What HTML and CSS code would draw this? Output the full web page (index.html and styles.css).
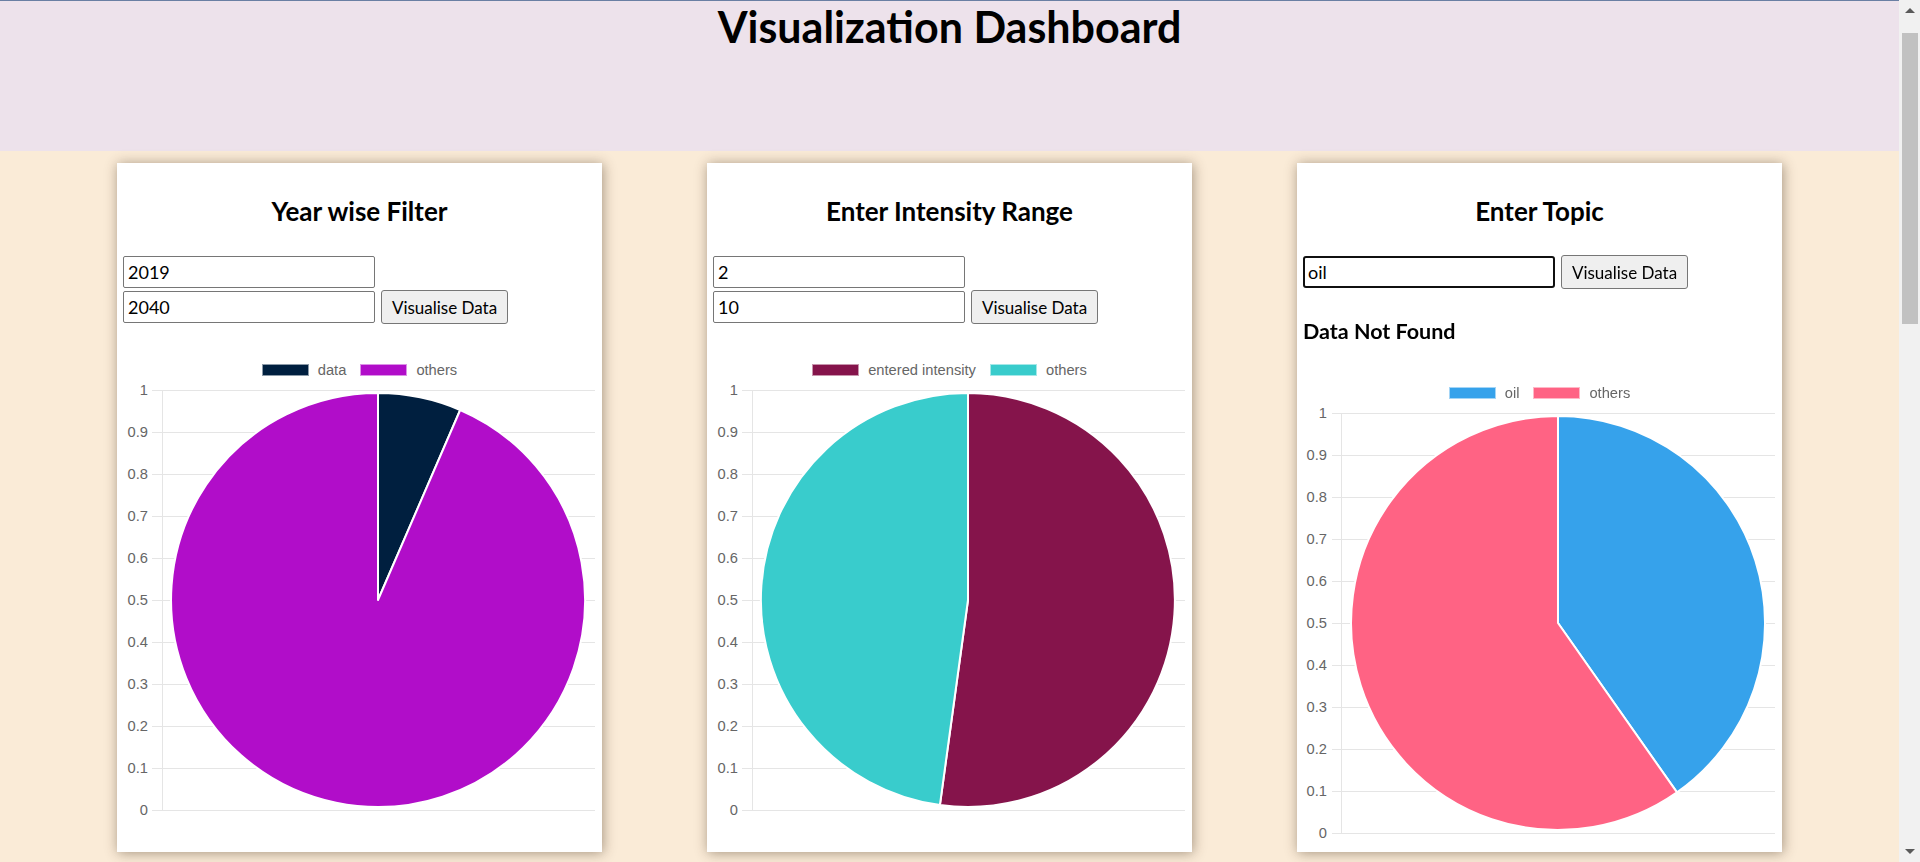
FILE: index.html
```html
<!DOCTYPE html>
<html lang="en">
<head>
<meta charset="utf-8">
<title>Visualization Dashboard</title>
<link rel="stylesheet" href="styles.css">
</head>
<body>
<div class="app">
<div class="viewport">
  <header class="topbar">
    <h1 class="title">Visualization Dashboard</h1>
  </header>
  <main class="cards">
    <section class="card">
      <h2 class="card-title">Year wise Filter</h2>
      <div class="form">
        <div class="row"><input class="field" type="text" value="2019"></div>
        <div class="row"><input class="field" type="text" value="2040"><button class="btn">Visualise Data</button></div>
      </div>
      <div class="legend">
        <span class="item"><span class="swatch sw-navy"></span>data</span>
        <span class="item"><span class="swatch sw-purple"></span>others</span>
      </div>
      <svg class="chart" width="473" height="476" viewBox="0 0 473 476">
        <g class="grid">
          <line x1="29" y1="12.5" x2="472" y2="12.5"/><line x1="29" y1="54.5" x2="472" y2="54.5"/><line x1="29" y1="96.5" x2="472" y2="96.5"/><line x1="29" y1="138.5" x2="472" y2="138.5"/><line x1="29" y1="180.5" x2="472" y2="180.5"/><line x1="29" y1="222.5" x2="472" y2="222.5"/><line x1="29" y1="264.5" x2="472" y2="264.5"/><line x1="29" y1="306.5" x2="472" y2="306.5"/><line x1="29" y1="348.5" x2="472" y2="348.5"/><line x1="29" y1="390.5" x2="472" y2="390.5"/><line x1="29" y1="432.5" x2="472" y2="432.5"/>
          <line x1="39.5" y1="12" x2="39.5" y2="433"/>
        </g>
        <g class="ticks">
          <text x="25" y="17">1</text><text x="25" y="59">0.9</text><text x="25" y="101">0.8</text><text x="25" y="143">0.7</text><text x="25" y="185">0.6</text><text x="25" y="227">0.5</text><text x="25" y="269">0.4</text><text x="25" y="311">0.3</text><text x="25" y="353">0.2</text><text x="25" y="395">0.1</text><text x="25" y="437">0</text>
        </g>
        <path class="slice" fill="#001f3f" d="M255 222 L255 15 A207 207 0 0 1 337.2 32 Z"/>
        <path class="slice" fill="#b10dc9" d="M255 222 L337.2 32 A207 207 0 1 1 255 15 Z"/>
      </svg>
    </section>

    <section class="card">
      <h2 class="card-title">Enter Intensity Range</h2>
      <div class="form">
        <div class="row"><input class="field" type="text" value="2"></div>
        <div class="row"><input class="field" type="text" value="10"><button class="btn">Visualise Data</button></div>
      </div>
      <div class="legend">
        <span class="item"><span class="swatch sw-maroon"></span>entered intensity</span>
        <span class="item"><span class="swatch sw-teal"></span>others</span>
      </div>
      <svg class="chart" width="473" height="476" viewBox="0 0 473 476">
        <g class="grid">
          <line x1="29" y1="12.5" x2="472" y2="12.5"/><line x1="29" y1="54.5" x2="472" y2="54.5"/><line x1="29" y1="96.5" x2="472" y2="96.5"/><line x1="29" y1="138.5" x2="472" y2="138.5"/><line x1="29" y1="180.5" x2="472" y2="180.5"/><line x1="29" y1="222.5" x2="472" y2="222.5"/><line x1="29" y1="264.5" x2="472" y2="264.5"/><line x1="29" y1="306.5" x2="472" y2="306.5"/><line x1="29" y1="348.5" x2="472" y2="348.5"/><line x1="29" y1="390.5" x2="472" y2="390.5"/><line x1="29" y1="432.5" x2="472" y2="432.5"/>
          <line x1="39.5" y1="12" x2="39.5" y2="433"/>
        </g>
        <g class="ticks">
          <text x="25" y="17">1</text><text x="25" y="59">0.9</text><text x="25" y="101">0.8</text><text x="25" y="143">0.7</text><text x="25" y="185">0.6</text><text x="25" y="227">0.5</text><text x="25" y="269">0.4</text><text x="25" y="311">0.3</text><text x="25" y="353">0.2</text><text x="25" y="395">0.1</text><text x="25" y="437">0</text>
        </g>
        <path class="slice" fill="#85144b" d="M255 222 L255 15 A207 207 0 1 1 226.9 427.1 Z"/>
        <path class="slice" fill="#39cccc" d="M255 222 L226.9 427.1 A207 207 0 0 1 255 15 Z"/>
      </svg>
    </section>

    <section class="card">
      <h2 class="card-title">Enter Topic</h2>
      <div class="form">
        <div class="row"><input class="field field-focus" type="text" value="oil" autofocus><button class="btn">Visualise Data</button></div>
      </div>
      <h3 class="notice">Data Not Found</h3>
      <div class="legend legend-low">
        <span class="item"><span class="swatch sw-blue"></span>oil</span>
        <span class="item"><span class="swatch sw-pink"></span>others</span>
      </div>
      <svg class="chart" width="473" height="476" viewBox="0 0 473 476">
        <g class="grid">
          <line x1="29" y1="12.5" x2="472" y2="12.5"/><line x1="29" y1="54.5" x2="472" y2="54.5"/><line x1="29" y1="96.5" x2="472" y2="96.5"/><line x1="29" y1="138.5" x2="472" y2="138.5"/><line x1="29" y1="180.5" x2="472" y2="180.5"/><line x1="29" y1="222.5" x2="472" y2="222.5"/><line x1="29" y1="264.5" x2="472" y2="264.5"/><line x1="29" y1="306.5" x2="472" y2="306.5"/><line x1="29" y1="348.5" x2="472" y2="348.5"/><line x1="29" y1="390.5" x2="472" y2="390.5"/><line x1="29" y1="432.5" x2="472" y2="432.5"/>
          <line x1="38.5" y1="12" x2="38.5" y2="433"/>
        </g>
        <g class="ticks">
          <text x="24" y="17">1</text><text x="24" y="59">0.9</text><text x="24" y="101">0.8</text><text x="24" y="143">0.7</text><text x="24" y="185">0.6</text><text x="24" y="227">0.5</text><text x="24" y="269">0.4</text><text x="24" y="311">0.3</text><text x="24" y="353">0.2</text><text x="24" y="395">0.1</text><text x="24" y="437">0</text>
        </g>
        <path class="slice" fill="#36a2eb" d="M255 222 L255 15 A207 207 0 0 1 374 391.4 Z"/>
        <path class="slice" fill="#ff6384" d="M255 222 L374 391.4 A207 207 0 1 1 255 15 Z"/>
      </svg>
    </section>
  </main>
</div>
<div class="scrollbar" aria-hidden="true">
  <div class="sb-btn sb-up"></div>
  <div class="sb-thumb"></div>
  <div class="sb-track"></div>
  <div class="sb-btn sb-down"></div>
</div>
</div>
</body>
</html>
```

FILE: styles.css
```css
html, body {
  margin: 0;
  height: 100%;
  overflow: hidden;
}

body {
  background: #faebd7;
  font-family: "Comic Sans MS", "Lato", sans-serif;
  color: #000;
}

.app {
  display: flex;
  height: 100vh;
}

.viewport {
  flex: 1;
  min-width: 0;
  overflow: hidden;
}

.scrollbar {
  flex: none;
  width: 21px;
  display: flex;
  flex-direction: column;
  background: #f1f1f1;
}

.sb-btn {
  height: 21px;
  flex: none;
  display: flex;
  align-items: center;
  justify-content: center;
}

.sb-up::before {
  content: "";
  border-left: 5px solid transparent;
  border-right: 5px solid transparent;
  border-bottom: 5px solid #5a5a5a;
}

.sb-down::before {
  content: "";
  border-left: 5px solid transparent;
  border-right: 5px solid transparent;
  border-top: 5px solid #5a5a5a;
}

.sb-thumb {
  flex: none;
  height: 291px;
  margin: 12px 2px 0 3px;
  background: #c1c1c1;
}

.sb-track {
  flex: 1;
}

.topbar {
  height: 150px;
  border-top: 1px solid #6a7fa3;
  background: #ede2eb;
}

.title {
  margin: 0;
  font-size: 43px;
  line-height: 1.2;
  font-weight: 700;
  text-align: center;
}

.cards {
  display: flex;
  align-items: flex-start;
  gap: 105px;
  padding: 12px 0 0 117px;
}

.card {
  box-sizing: border-box;
  width: 485px;
  height: 689px;
  flex: none;
  padding: 0 6px;
  background: #fff;
  box-shadow: 1px 1px 12px rgba(60, 40, 20, 0.45);
  overflow: hidden;
}

.card-title {
  margin: 32px 0 0;
  font-size: 26px;
  line-height: 32px;
  font-weight: 700;
  text-align: center;
}

.form {
  margin-top: 28px;
  display: flex;
  flex-direction: column;
  gap: 1px;
}

.row {
  display: flex;
  align-items: center;
  gap: 6px;
  height: 34px;
}

.field {
  box-sizing: border-box;
  width: 252px;
  height: 32px;
  margin: 0;
  padding: 1px 4px;
  border: 1px solid #767676;
  border-radius: 2px;
  background: #fff;
  font-family: "Comic Sans MS", "Lato", sans-serif;
  font-size: 18px;
  color: #000;
}

.field-focus {
  border: 2px solid #101010;
  border-radius: 3px;
  padding: 0 3px;
  outline: none;
}

.btn {
  box-sizing: border-box;
  width: 127px;
  height: 34px;
  margin: 0;
  padding: 0 6px;
  border: 1px solid #767676;
  border-radius: 3px;
  background: #efefef;
  font-family: "Comic Sans MS", "Lato", sans-serif;
  font-size: 17px;
  color: #000;
}

.notice {
  margin: 30px 0 0;
  font-size: 21.5px;
  line-height: 24px;
  font-weight: 700;
}

.legend {
  display: flex;
  justify-content: center;
  align-items: center;
  gap: 14px;
  height: 16px;
  margin-top: 38px;
  font-family: "Liberation Sans", Arial, sans-serif;
  font-size: 14.7px;
  color: #666;
}

.legend-low {
  margin-top: 42px;
}

.item {
  display: flex;
  align-items: center;
  gap: 9px;
}

.swatch {
  display: block;
  width: 47px;
  height: 12px;
  box-shadow: inset 0 0 0 1px rgba(255, 255, 255, 0.55);
}

.sw-navy { background: #001f3f; }
.sw-purple { background: #b10dc9; }
.sw-maroon { background: #85144b; }
.sw-teal { background: #39cccc; }
.sw-blue { background: #36a2eb; }
.sw-pink { background: #ff6384; }

.chart {
  display: block;
}

.grid line {
  stroke: #e5e5e5;
  stroke-width: 1;
}

.ticks text {
  font-family: "Liberation Sans", Arial, sans-serif;
  font-size: 14.7px;
  fill: #666;
  text-anchor: end;
}

.slice {
  stroke: #fff;
  stroke-width: 2;
  stroke-linejoin: round;
}
```
